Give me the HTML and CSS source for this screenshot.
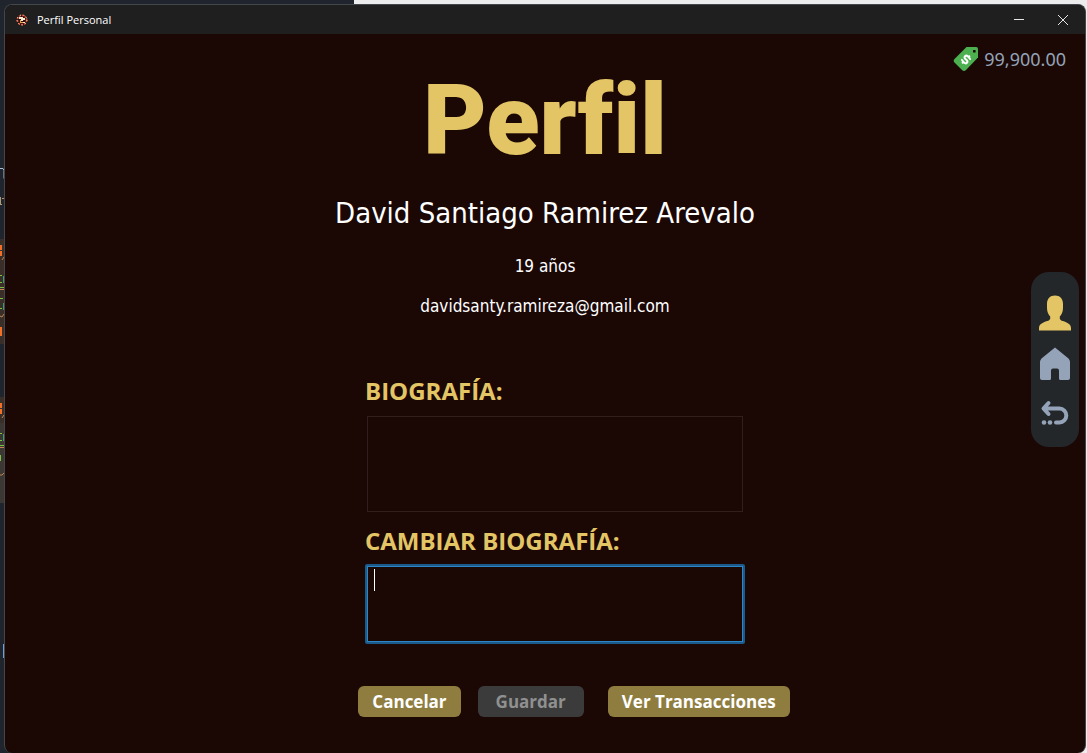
FILE: index.html
```html
<!DOCTYPE html>
<html lang="es">
<head>
<meta charset="utf-8">
<title>Perfil Personal</title>
<link rel="stylesheet" href="styles.css">
</head>
<body>
<div class="desktop">
  <svg class="editor-edge" width="4" height="753" viewBox="0 0 4 753" aria-hidden="true">
    <path fill="#3a2f28" d="M0 239h4v105H0zM0 397h4v26H0z"/>
    <path fill="#3b3733" d="M0 423h4v80H0z"/>
    <path fill="none" stroke="#a9bdd3" d="M0 168.500h3l1 2v8"/>
    <path fill="none" stroke="#b09a74" d="M0 204.500h2M2 198.500h2M.5 197v7"/>
    <path stroke="#f0702a" stroke-width="2" d="M1 245v5M1 251v5M1 327v9M1 403v5M1 409v5"/>
    <path fill="none" stroke="#c08552" d="M2 260l2-3M0 316l2 1 2-3M2 418l2-3M0 289.500h4M0 447.500h4M0 475h2l2-2"/>
    <path stroke="#7bbf45" d="M0 275.500h2M0 282.500h2M0 287.500h4M0 298.500h3M0 308.500h2M0 433.500h2M0 440.500h2M0 445.500h4M.5 455v6"/>
    <path stroke="#3f9a6e" d="M3.500 276v7M3.500 303v7M3.500 434v7"/>
    <path stroke="#6f9fd8" d="M3.500 644v14"/>
  </svg>
  <div class="window">
    <header class="titlebar">
      <svg class="app-icon" width="12" height="12" viewBox="0 0 12 12" aria-hidden="true">
        <circle cx="6" cy="6" r="4.600" fill="#2a1010" stroke="#d8452c" stroke-width="1.600" stroke-dasharray="2 1"/>
        <circle cx="6" cy="6" r="5" fill="none" stroke="#f4e6d0" stroke-width="1" stroke-dasharray="1 2.500"/>
        <path fill="#f7ead2" d="M3 3h4v1h2v2H7v1H5V5H3zM7 8h2v1H7z"/>
        <path fill="#e8a33c" d="M4 6h1v2h2v1H4z"/>
      </svg>
      <span class="window-title">Perfil Personal</span>
      <button class="window-button" type="button" aria-label="Minimizar">
        <svg width="12" height="12" viewBox="0 0 12 12"><path d="M1 5.500h10" stroke="#e6e6e6" fill="none"/></svg>
      </button>
      <button class="window-button" type="button" aria-label="Cerrar">
        <svg width="12" height="12" viewBox="0 0 12 12"><path d="M1 1l10 10M11 1L1 11" stroke="#e6e6e6" fill="none"/></svg>
      </button>
    </header>
    <div class="content">
      <main class="profile">
        <h1 class="page-title">Perfil</h1>
        <p class="name">David Santiago Ramirez Arevalo</p>
        <p class="detail">19 años</p>
        <p class="detail">davidsanty.ramireza@gmail.com</p>
        <form class="bio-form">
          <div class="fields">
            <label class="field-label" for="bio">BIOGRAFÍA:</label>
            <textarea class="bio" id="bio" readonly></textarea>
            <label class="field-label" for="new-bio">CAMBIAR BIOGRAFÍA:</label>
            <div class="edit-wrap">
              <textarea class="new-bio" id="new-bio"></textarea>
              <span class="caret"></span>
            </div>
          </div>
          <div class="actions">
            <button class="button" type="button">Cancelar</button>
            <button class="button save" type="button" disabled>Guardar</button>
            <button class="button" type="button">Ver Transacciones</button>
          </div>
        </form>
      </main>
      <aside class="side">
        <div class="balance">
          <svg width="26" height="26" viewBox="0 0 26 26" aria-hidden="true">
            <path fill="#4caf50" d="M13.500 1H23q2 0 2 2v8.500L13 24q-2 1.800-4 0L1.500 16.500q-1.600-1.800 0-3.500z"/>
            <rect x="20" y="4" width="2.600" height="2.600" rx=".6" fill="#1b0805"/>
            <g transform="translate(13 13.500) rotate(45)" fill="none" stroke="#fff" stroke-width="2">
              <path d="M3 -2.500Q2.500 -3.500 1 -3.500H-.8Q-3 -3.500 -3 -1.700T-.8 0H.8Q3 0 3 1.700T.8 3.500H-1Q-2.500 3.500 -3 2.500M0 -5.500v2M0 3.500v2"/>
            </g>
          </svg>
          <span>99,900.00</span>
        </div>
        <nav class="nav">
          <a class="nav-link" href="#perfil" aria-label="Perfil">
            <svg width="32" height="36" viewBox="0 0 32 36"><path fill="#e3c565" d="M16 .5c-5 0-8 3.200-8 8.500v4c0 4 1.500 6.800 3.200 8.500v2.300c-.5 1.200-1.500 1.800-3 2.300C3.500 27.500 0 29.500 0 33v2.500h32V33c0-3.500-3.500-5.500-8.200-6.900-1.500-.5-2.500-1.100-3-2.300v-2.300C22.500 19.800 24 17 24 13V9c0-5.300-3-8.500-8-8.500z"/></svg>
          </a>
          <a class="nav-link" href="#inicio" aria-label="Inicio">
            <svg width="32" height="34" viewBox="0 0 32 34"><path fill="#94a3b8" d="M16 .5L29.500 11.500Q31 13 31 15v16q0 2-2 2h-7.500q-1.500 0-1.500-1.500v-8q0-2-2-2h-4q-2 0-2 2v8q0 1.500-1.500 1.500H3q-2 0-2-2V15q0-2 1.500-3.500z"/></svg>
          </a>
          <a class="nav-link" href="#volver" aria-label="Volver">
            <svg width="32" height="32" viewBox="0 0 32 32"><path fill="none" stroke="#94a3b8" stroke-width="4" stroke-linecap="round" stroke-linejoin="round" d="M9.500 6L4.500 11.500l5 5.500M5 11.500h15.500a6.800 7 0 0 1 0 14H17"/><circle cx="5" cy="25.500" r="2.300" fill="#94a3b8"/><circle cx="11" cy="25.500" r="2.300" fill="#94a3b8"/></svg>
          </a>
        </nav>
      </aside>
    </div>
  </div>
</div>
</body>
</html>
```
FILE: styles.css
```css
* {
  box-sizing: border-box;
}

body {
  margin: 0;
  font-family: "DejaVu Sans Condensed", "DejaVu Sans", sans-serif;
  color: #fff;
}

.desktop {
  display: flex;
  min-height: 100vh;
  padding: 4px 1px 0 0;
  background: linear-gradient(90deg, #20242c 354px, #ececec 354px);
}

.editor-edge {
  flex: none;
  margin-top: -4px;
}

.window {
  flex: 1;
  display: flex;
  flex-direction: column;
  min-width: 0;
  overflow: hidden;
  border: 1px solid #43464b;
  border-bottom: 0;
  border-radius: 8px;
  background: #1b0805;
}

.titlebar {
  display: flex;
  align-items: center;
  height: 29px;
  padding-left: 11px;
  background: #1f1f1f;
  font: 11px "Open Sans", sans-serif;
}

.window-title {
  flex: 1;
  margin-left: 9px;
}

.window-button {
  display: flex;
  align-items: center;
  justify-content: center;
  width: 44px;
  height: 29px;
  padding: 0;
  border: 0;
  background: none;
}

.content {
  display: grid;
  grid-template-columns: 1fr auto 1fr;
  flex: 1;
}

.profile {
  grid-column: 2;
  display: flex;
  flex-direction: column;
  align-items: center;
}

.page-title {
  margin: 31px 0 0;
  font: 900 98px/112px Roboto, sans-serif;
  font-variant-ligatures: none;
  color: #e3c565;
}

.name {
  margin: 16px 0 0;
  font-size: 29px;
  line-height: 40px;
}

.detail {
  margin: 16px 0 0;
  font-size: 17px;
  line-height: 24px;
}

.name + .detail {
  margin-top: 21px;
}

.bio-form {
  display: flex;
  flex-direction: column;
  align-items: center;
  margin-top: 55px;
  padding-bottom: 36px;
}

.fields {
  display: flex;
  flex-direction: column;
  width: 400px;
  padding-left: 20px;
}

.field-label {
  font: bold 24px/36px "Open Sans", sans-serif;
  color: #e3c565;
}

.bio,
.new-bio {
  display: block;
  padding: 4px 8px;
  background: transparent;
  color: #fff;
  font: 18px "Open Sans", sans-serif;
  resize: none;
  outline: 0;
}

.bio {
  height: 96px;
  margin: 7px 2px 11px;
  border: 1px solid #321f1d;
}

.edit-wrap {
  position: relative;
  margin-top: 5px;
}

.new-bio {
  width: 100%;
  height: 80px;
  border: 2px solid #1b5a8a;
  border-radius: 2px;
  box-shadow: inset 0 0 0 1px #2a86c4;
}

.caret {
  position: absolute;
  top: 5px;
  left: 9px;
  width: 1px;
  height: 22px;
  background: #fff;
}

.actions {
  display: flex;
  margin-top: 42px;
  padding-left: 58px;
}

.button {
  height: 31px;
  padding: 0 14px;
  border: 0;
  border-radius: 6px;
  background: #8f7d3f;
  color: #fff;
  font: bold 17px "Open Sans", sans-serif;
}

.save {
  margin: 0 24px 0 17px;
  padding: 0 18px;
  background: #3b3b3b;
  color: #909090;
}

.side {
  display: flex;
  flex-direction: column;
  align-items: flex-end;
  padding: 12px 6px 0 0;
}

.balance {
  display: flex;
  align-items: center;
  gap: 5px;
  margin-right: 13px;
  font: 18px "Noto Sans", sans-serif;
  color: #94a3b8;
}

.nav {
  display: flex;
  flex-direction: column;
  align-items: center;
  gap: 16px;
  margin-top: 200px;
  padding: 23px 8px 18px;
  border-radius: 18px;
  background: #24272a;
}

.nav-link {
  display: block;
}

.nav-link svg {
  display: block;
}
```
